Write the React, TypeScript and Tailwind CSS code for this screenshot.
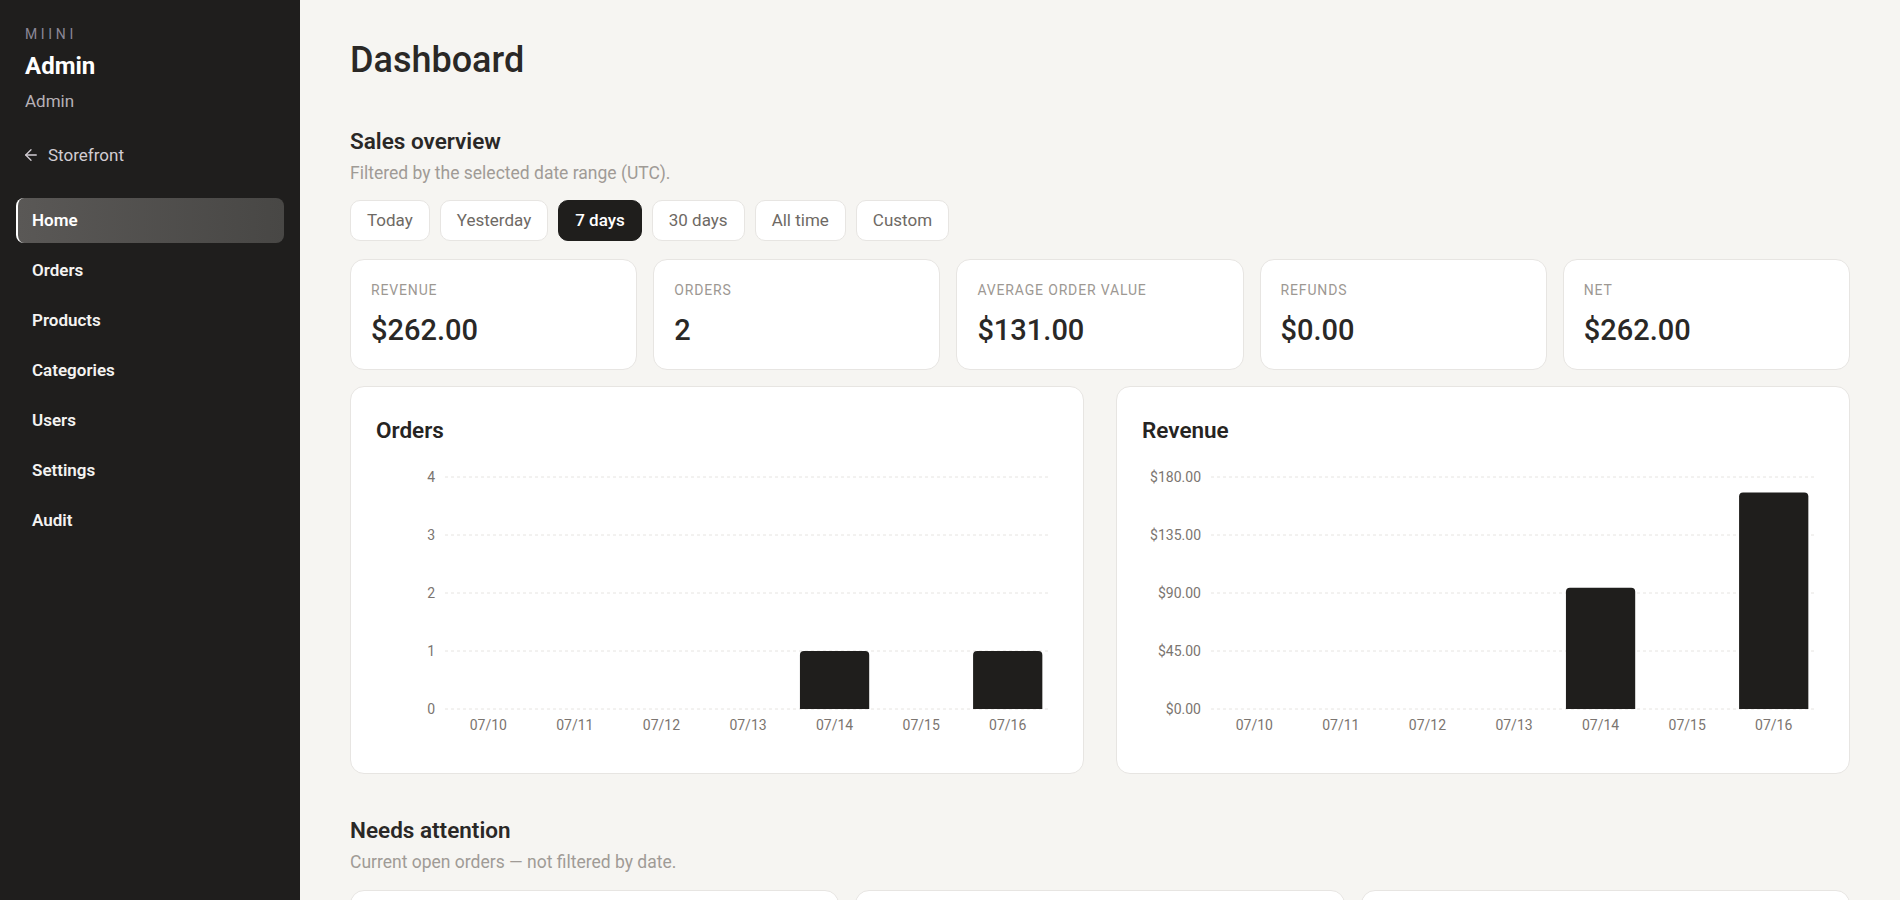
import { ArrowLeft } from "lucide-react";

const navItems = ["Home", "Orders", "Products", "Categories", "Users", "Settings", "Audit"];
const ranges = ["Today", "Yesterday", "7 days", "30 days", "All time", "Custom"];

const stats = [
  { label: "Revenue", value: "$262.00" },
  { label: "Orders", value: "2" },
  { label: "Average order value", value: "$131.00" },
  { label: "Refunds", value: "$0.00" },
  { label: "Net", value: "$262.00" },
];

const days = ["07/10", "07/11", "07/12", "07/13", "07/14", "07/15", "07/16"];
const orderCounts = [0, 0, 0, 0, 1, 0, 1];
const revenueByDay = [0, 0, 0, 0, 94, 0, 168];

type ChartProps = {
  title: string;
  values: number[];
  max: number;
  ticks: string[];
};

// plot box inside the svg
const W = 684;
const H = 280;
const PLOT_L = 70;
const PLOT_R = 676;
const PLOT_T = 10;
const PLOT_B = 242;

function BarChart({ title, values, max, ticks }: ChartProps) {
  const band = (PLOT_R - PLOT_L) / values.length;
  const step = (PLOT_B - PLOT_T) / (ticks.length - 1);
  return (
    <div className="bg-white border border-[#e7e5e2] rounded-[14px] pl-6 pr-6 pt-[29px] pb-[26px]">
      <h3 className="pl-px text-[22.5px] leading-7 font-semibold text-[#262422]">{title}</h3>
      <svg width={W} height={H} viewBox={`0 0 ${W} ${H}`} className="mt-[23px] block">
        {ticks.map((t, i) => {
          const y = PLOT_T + step * i;
          return (
            <g key={t}>
              <line x1={PLOT_L} x2={PLOT_R} y1={y} y2={y} stroke="#e6e4e1" strokeDasharray="3 3" />
              <text x={60} y={y} dy="0.355em" textAnchor="end" fontSize={14} fill="#7b7570">
                {t}
              </text>
            </g>
          );
        })}
        {values.map((v, i) => {
          const x = PLOT_L + band * i;
          const h = (v / max) * (PLOT_B - PLOT_T);
          const bw = band * 0.8;
          const bx = x + band * 0.1;
          const top = PLOT_B - h;
          const r = 4;
          return (
            <g key={days[i]}>
              {v > 0 && (
                <path
                  d={`M${bx},${PLOT_B} V${top + r} Q${bx},${top} ${bx + r},${top} H${bx + bw - r} Q${bx + bw},${top} ${bx + bw},${top + r} V${PLOT_B} Z`}
                  fill="#1f1e1c"
                />
              )}
              <text x={x + band / 2} y={258} dy="0.355em" textAnchor="middle" fontSize={14} fill="#7b7570">
                {days[i]}
              </text>
            </g>
          );
        })}
      </svg>
    </div>
  );
}

export default function App() {
  return (
    <div className="flex h-screen overflow-hidden bg-[#f6f5f2] font-[Roboto,'Liberation_Sans',sans-serif] text-[#2a2826]">
      <aside className="w-[300px] shrink-0 bg-[#1f1e1d] pt-6">
        <div className="pl-[25px] pr-6">
          <div className="text-[14px] leading-5 tracking-[0.26em] text-[#8b8796]">MIINI</div>
          <div className="mt-1.5 text-2xl leading-8 font-bold text-white">Admin</div>
          <div className="mt-[7px] text-[17px] leading-6 text-[#b7b1b6]">Admin</div>
          <a className="mt-[30px] flex items-center gap-2 text-[17px] leading-6 text-[#d2cdd3]">
            <ArrowLeft size={18} strokeWidth={1.75} className="-ml-[3px]" />
            Storefront
          </a>
        </div>
        <nav className="mt-[31px] px-4 flex flex-col gap-[5px]">
          {navItems.map((item) =>
            item === "Home" ? (
              <a
                key={item}
                className="h-[45px] flex items-center rounded-lg border-l-2 border-white pl-[14px] bg-gradient-to-r from-[#5a5856] to-[#484745] text-[17px] font-semibold text-white"
              >
                {item}
              </a>
            ) : (
              <a key={item} className="h-[45px] flex items-center rounded-lg pl-4 text-[17px] font-semibold text-[#f4f3f1]">
                {item}
              </a>
            )
          )}
        </nav>
      </aside>

      <main className="flex-1 overflow-hidden px-[50px] pt-10">
        <h1 className="text-4xl leading-10 font-medium text-[#2a2826]">Dashboard</h1>

        <section className="mt-[47px]">
          <h2 className="text-[22.5px] leading-7 font-semibold">Sales overview</h2>
          <p className="mt-1.5 text-[17.5px] leading-6 text-[#a09b96]">Filtered by the selected date range (UTC).</p>

          <div className="mt-[15px] flex gap-2.5">
            {ranges.map((r) => (
              <button
                key={r}
                className={
                  r === "7 days"
                    ? "h-[41px] px-4 rounded-[10px] border border-[#1f1e1c] bg-[#1f1e1c] text-[17px] text-white font-medium"
                    : "h-[41px] px-4 rounded-[10px] border border-[#e7e5e2] bg-white text-[17px] text-[#6e6964]"
                }
              >
                {r}
              </button>
            ))}
          </div>

          <div className="mt-[18px] grid grid-cols-5 gap-4">
            {stats.map((s) => (
              <div key={s.label} className="bg-white border border-[#e7e5e2] rounded-[14px] px-5 pt-5 pb-[21px]">
                <div className="text-sm leading-5 uppercase tracking-[0.06em] text-[#9d9893]">{s.label}</div>
                <div className="mt-3 text-[29px] leading-9 font-medium text-[#2a2826]">{s.value}</div>
              </div>
            ))}
          </div>

          <div className="mt-4 grid grid-cols-2 gap-8">
            <BarChart title="Orders" values={orderCounts} max={4} ticks={["4", "3", "2", "1", "0"]} />
            <BarChart
              title="Revenue"
              values={revenueByDay}
              max={180}
              ticks={["$180.00", "$135.00", "$90.00", "$45.00", "$0.00"]}
            />
          </div>
        </section>

        <section className="mt-[42px]">
          <h2 className="text-[22.5px] leading-7 font-semibold">Needs attention</h2>
          <p className="mt-1.5 text-[17.5px] leading-6 text-[#a09b96]">Current open orders — not filtered by date.</p>
          <div className="mt-4 grid grid-cols-3 gap-4">
            <div className="h-[160px] bg-white border border-[#e7e5e2] rounded-[14px]" />
            <div className="h-[160px] bg-white border border-[#e7e5e2] rounded-[14px]" />
            <div className="h-[160px] bg-white border border-[#e7e5e2] rounded-[14px]" />
          </div>
        </section>
      </main>
    </div>
  );
}
